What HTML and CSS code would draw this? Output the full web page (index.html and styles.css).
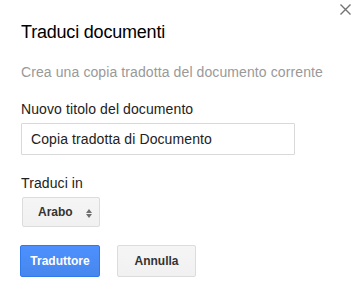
FILE: index.html
```html
<!DOCTYPE html>
<html lang="it">
<head>
<meta charset="utf-8">
<title>Traduci documenti</title>
<link rel="stylesheet" href="styles.css">
</head>
<body>
<div class="dialog">
  <button class="close" aria-label="Chiudi">
    <svg width="11" height="11" viewBox="0 0 11 11"><path d="M0.5 0.5L10.5 10.5M10.5 0.5L0.5 10.5" stroke="#737373" stroke-width="1.4" fill="none"/></svg>
  </button>
  <h1 class="title">Traduci documenti</h1>
  <p class="subtitle">Crea una copia tradotta del documento corrente</p>
  <label class="label" for="doc-title">Nuovo titolo del documento</label>
  <input class="text-input" id="doc-title" type="text" value="Copia tradotta di Documento">
  <div class="label label-lang">Traduci in</div>
  <div class="select">
    <span class="select-text">Arabo</span>
    <span class="arrows"><span class="up"></span><span class="down"></span></span>
  </div>
  <div class="actions">
    <button class="btn btn-primary">Traduttore</button>
    <button class="btn btn-secondary">Annulla</button>
  </div>
</div>
</body>
</html>
```
FILE: styles.css
```css
* { box-sizing: border-box; }
html, body { margin: 0; padding: 0; background: #fff; }
body { font-family: Arial, "Liberation Sans", sans-serif; }
.dialog {
  position: relative;
  width: 358px;
  height: 290px;
  padding: 20px 21px 0 21px;
  display: flex;
  flex-direction: column;
  align-items: flex-start;
}
.close {
  position: absolute;
  top: 4px;
  left: 340px;
  width: 11px;
  height: 11px;
  padding: 0;
  border: 0;
  background: none;
  display: block;
}
.close svg { display: block; }
.title {
  margin: 0;
  font-size: 18px;
  font-weight: normal;
  line-height: 24px;
  color: #000;
  letter-spacing: -0.2px;
}
.subtitle {
  margin: 18px 0 0 0;
  font-size: 14px;
  line-height: 20px;
  color: #999;
  letter-spacing: 0.1px;
}
.label {
  margin-top: 17px;
  font-size: 14px;
  line-height: 20px;
  color: #222;
  letter-spacing: 0.1px;
}
.label-lang { margin-top: 18px; }
.text-input {
  margin-top: 4px;
  width: 274px;
  height: 32px;
  border: 1px solid #d9d9d9;
  border-radius: 1px;
  padding: 0 9px;
  font-family: Arial, "Liberation Sans", sans-serif;
  font-size: 14px;
  color: #222;
  letter-spacing: 0.1px;
  outline: none;
}
.select {
  margin: 4px 0 0 1px;
  width: 78px;
  height: 30px;
  border: 1px solid #dcdcdc;
  border-radius: 2px;
  background: linear-gradient(#f5f5f5, #f1f1f1);
  display: flex;
  align-items: center;
  padding: 0 7px 0 15px;
  justify-content: space-between;
}
.select-text {
  font-size: 12px;
  font-weight: bold;
  color: #333;
}
.arrows {
  display: flex;
  flex-direction: column;
  gap: 1px;
  margin-top: 3px;
}
.up, .down {
  width: 0;
  height: 0;
  border-left: 3px solid transparent;
  border-right: 3px solid transparent;
}
.up { border-bottom: 4px solid #707070; }
.down { border-top: 4px solid #707070; }
.actions {
  margin-top: 18px;
  margin-left: -1px;
  display: flex;
  gap: 17px;
}
.btn {
  height: 32px;
  border-radius: 2px;
  font-family: Arial, "Liberation Sans", sans-serif;
  font-size: 12px;
  font-weight: bold;
  padding: 0;
  text-align: center;
}
.btn-primary {
  width: 80px;
  color: #fff;
  border: 1px solid #3079ed;
  background: linear-gradient(#4d90fe, #4787ed);
}
.btn-secondary {
  width: 79px;
  color: #333;
  border: 1px solid #dcdcdc;
  background: linear-gradient(#f5f5f5, #f1f1f1);
}
```
